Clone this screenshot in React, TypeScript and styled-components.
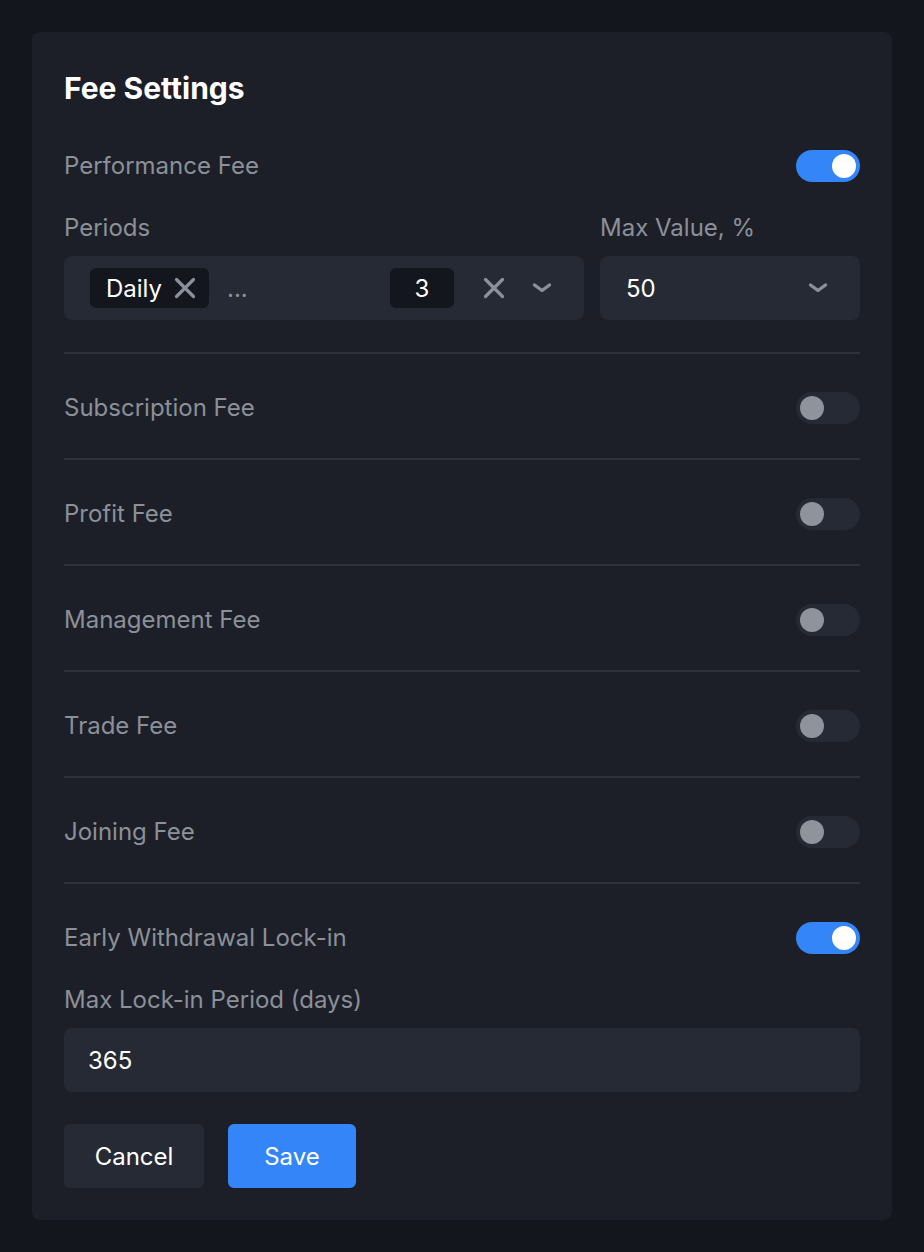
import React, { useState } from 'react';
import styled, { createGlobalStyle } from 'styled-components';

const GlobalStyle = createGlobalStyle`
  html, body {
    margin: 0;
    padding: 0;
    background: #13161c;
  }
  body {
    font-family: Inter, "Noto Sans", sans-serif;
    -webkit-font-smoothing: antialiased;
  }
  * { box-sizing: border-box; }
`;

const Page = styled.div`
  min-height: 1252px;
  padding: 32px;
  background: #13161c;
`;

const Card = styled.div`
  background: #1c1f27;
  border-radius: 8px;
  padding: 32px;
  display: flex;
  flex-direction: column;
`;

const Title = styled.h2`
  margin: 0;
  height: 48px;
  line-height: 48px;
  font-size: 30px;
  font-weight: 700;
  color: #ffffff;
`;

const Section = styled.div<{ $last?: boolean; $pb?: number }>`
  padding: 38px 0 ${p => (p.$last ? 0 : p.$pb ?? 34)}px;
  border-bottom: ${p => (p.$last ? 'none' : '2px solid #2d323d')};
  display: flex;
  flex-direction: column;
`;

const ToggleRow = styled.div`
  display: flex;
  align-items: center;
  justify-content: space-between;
  height: 32px;
`;

const Label = styled.span`
  font-size: 24px;
  line-height: 32px;
  color: #8b9099;
`;

const FieldLabel = styled(Label)`
  display: block;
  margin: 30px 0 12px;
`;

const Track = styled.button<{ $on: boolean }>`
  position: relative;
  width: 64px;
  height: 32px;
  border: none;
  padding: 0;
  border-radius: 16px;
  background: ${p => (p.$on ? '#3385f8' : '#252a35')};
  cursor: pointer;
`;

const Knob = styled.span<{ $on: boolean }>`
  position: absolute;
  top: 4px;
  left: ${p => (p.$on ? '36px' : '4px')};
  width: 24px;
  height: 24px;
  border-radius: 50%;
  background: ${p => (p.$on ? '#ffffff' : '#8e939c')};
`;

const Fields = styled.div`
  display: grid;
  grid-template-columns: 520px 1fr;
  column-gap: 16px;
`;

const FieldCol = styled.div`
  display: flex;
  flex-direction: column;
`;

const Select = styled.div`
  height: 64px;
  border-radius: 8px;
  background: #252a35;
  display: flex;
  align-items: center;
  padding: 0 31px 0 26px;
  color: #ffffff;
  font-size: 24px;
`;

const Chip = styled.span<{ $w?: number }>`
  height: 40px;
  border-radius: 6px;
  background: #13161c;
  display: inline-flex;
  align-items: center;
  justify-content: center;
  gap: 12px;
  padding: ${p => (p.$w ? '0' : '0 13px 0 16px')};
  width: ${p => (p.$w ? `${p.$w}px` : 'auto')};
  color: #ffffff;
  font-size: 24px;
`;

const More = styled.span`
  color: #8b9099;
  font-size: 24px;
  margin-left: 18px;
  flex: 1;
`;

const Value = styled.span`
  flex: 1;
`;

const IconSlot = styled.span<{ $ml?: number }>`
  display: inline-flex;
  margin-left: ${p => p.$ml ?? 0}px;
`;

const TextInput = styled.input`
  height: 64px;
  border-radius: 8px;
  background: #252a35;
  border: none;
  outline: none;
  padding: 0 24px;
  color: #ffffff;
  font-family: Inter, "Noto Sans", sans-serif;
  font-size: 24px;
  width: 100%;
`;

const Actions = styled.div`
  display: flex;
  gap: 24px;
  margin-top: 32px;
`;

const Button = styled.button<{ $primary?: boolean; $w: number }>`
  height: 64px;
  width: ${p => p.$w}px;
  padding: 0;
  border: none;
  border-radius: 6px;
  font-family: Inter, "Noto Sans", sans-serif;
  font-size: 24px;
  color: #ffffff;
  background: ${p => (p.$primary ? '#3385f8' : '#252a35')};
  cursor: pointer;
`;

const XIcon = () => (
  <svg width="22" height="22" viewBox="0 0 22 22" fill="none">
    <path d="M2.5 2.5L19.5 19.5M19.5 2.5L2.5 19.5" stroke="#8b9099" strokeWidth="3.2" strokeLinecap="round" />
  </svg>
);

const Chevron = () => (
  <svg width="22" height="22" viewBox="0 0 22 22" fill="none">
    <path d="M3.5 8L11 13.5L18.5 8" stroke="#8b9099" strokeWidth="3.4" strokeLinecap="round" strokeLinejoin="round" />
  </svg>
);

const Toggle = ({ on, onChange }: { on: boolean; onChange: () => void }) => (
  <Track $on={on} onClick={onChange}>
    <Knob $on={on} />
  </Track>
);

const fees = ['Subscription Fee', 'Profit Fee', 'Management Fee', 'Trade Fee', 'Joining Fee'];

export default function App() {
  const [perf, setPerf] = useState(true);
  const [lock, setLock] = useState(true);
  const [others, setOthers] = useState<Record<string, boolean>>({});

  return (
    <>
      <GlobalStyle />
      <Page>
        <Card>
          <Title>Fee Settings</Title>

          <Section $pb={32}>
            <ToggleRow>
              <Label>Performance Fee</Label>
              <Toggle on={perf} onChange={() => setPerf(!perf)} />
            </ToggleRow>
            <Fields>
              <FieldCol>
                <FieldLabel>Periods</FieldLabel>
                <Select>
                  <Chip>
                    Daily
                    <XIcon />
                  </Chip>
                  <More>...</More>
                  <Chip $w={64}>3</Chip>
                  <IconSlot $ml={29}>
                    <XIcon />
                  </IconSlot>
                  <IconSlot $ml={26}>
                    <Chevron />
                  </IconSlot>
                </Select>
              </FieldCol>
              <FieldCol>
                <FieldLabel>Max Value, %</FieldLabel>
                <Select>
                  <Value>50</Value>
                  <IconSlot>
                    <Chevron />
                  </IconSlot>
                </Select>
              </FieldCol>
            </Fields>
          </Section>

          {fees.map(name => (
            <Section key={name}>
              <ToggleRow>
                <Label>{name}</Label>
                <Toggle
                  on={!!others[name]}
                  onChange={() => setOthers({ ...others, [name]: !others[name] })}
                />
              </ToggleRow>
            </Section>
          ))}

          <Section $last>
            <ToggleRow>
              <Label>Early Withdrawal Lock-in</Label>
              <Toggle on={lock} onChange={() => setLock(!lock)} />
            </ToggleRow>
            <FieldLabel>Max Lock-in Period (days)</FieldLabel>
            <TextInput defaultValue="365" />
          </Section>

          <Actions>
            <Button $w={140}>Cancel</Button>
            <Button $w={128} $primary>Save</Button>
          </Actions>
        </Card>
      </Page>
    </>
  );
}
